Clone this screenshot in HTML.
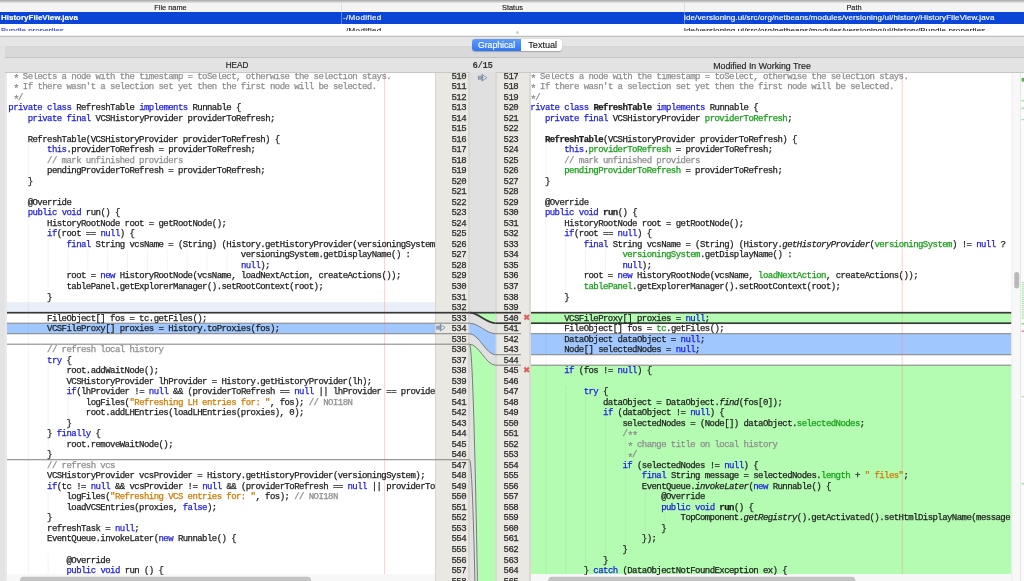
<!DOCTYPE html><html><head><meta charset="utf-8"><style>
html,body{margin:0;padding:0;width:1024px;height:581px;overflow:hidden;background:#e3e3e3;position:relative}
*{box-sizing:border-box}
.abs{position:absolute}
.sans{font-family:"Liberation Sans",sans-serif;will-change:transform;-webkit-text-stroke:0.15px currentColor}
.clip{position:absolute;overflow:hidden;will-change:transform}
.r,.n{position:absolute;white-space:pre;font-family:"Liberation Mono",monospace;font-size:9.0px;letter-spacing:-0.5558px;line-height:10.5px;color:#1e1e1e;-webkit-text-stroke:0.25px currentColor}
.n{color:#2a2a2a;text-align:right}
i{font-style:normal}
u{text-decoration:none;display:inline-block;width:4.845px;overflow:visible;text-align:center;letter-spacing:0;font-size:10.5px;line-height:0;position:relative;top:3.2px}
i.k{color:#1c1ce0}
i.c{color:#8e8e8e}
i.s{color:#ce7b00}
i.f{color:#17a017}
i.b{font-weight:bold}
i.i{font-style:italic}
</style></head><body>

<div class="abs" style="left:0;top:0;width:1024px;height:3px;background:linear-gradient(#a6a6a6,#e8e8e8)"></div>
<div class="abs" style="left:0;top:2.5px;width:1024px;height:9.5px;background:#f4f4f4"></div>
<div class="abs" style="left:341px;top:3px;width:1px;height:9px;background:#dedede"></div>
<div class="abs" style="left:684px;top:3px;width:1px;height:9px;background:#dedede"></div>
<div class="abs sans" style="left:0;top:2.5px;width:341px;text-align:center;font-size:7.4px;line-height:10px;color:#222">File name</div>
<div class="abs sans" style="left:341px;top:2.5px;width:343px;text-align:center;font-size:7.4px;line-height:10px;color:#222">Status</div>
<div class="abs sans" style="left:684px;top:2.5px;width:340px;text-align:center;font-size:7.4px;line-height:10px;color:#222">Path</div>
<div class="abs" style="left:0;top:12px;width:1024px;height:11.7px;background:#0b45d8"></div>
<div class="abs" style="left:341px;top:12px;width:1px;height:11.7px;background:#5c86e6"></div>
<div class="abs" style="left:684px;top:12px;width:1px;height:11.7px;background:#5c86e6"></div>
<div class="abs sans" style="left:1px;top:12px;font-size:8px;line-height:12px;font-weight:bold;color:#fff;white-space:pre">HistoryFileView.java</div>
<div class="abs sans" style="left:342.5px;top:12px;font-size:8px;line-height:12px;color:#fff;white-space:pre;letter-spacing:0.35px">-/Modified</div>
<div class="abs sans" style="left:684px;top:12px;font-size:8px;line-height:12px;color:#fff;white-space:pre;letter-spacing:0.14px">ide/versioning.ui/src/org/netbeans/modules/versioning/ui/history/HistoryFileView.java</div>
<div class="abs" style="left:0;top:23.7px;width:1024px;height:12px;background:#fff"></div>
<div class="clip" style="left:0;top:24px;width:1024px;height:6.8px">
 <div class="abs sans" style="left:1px;top:1.1px;font-size:8px;line-height:12px;color:#2b3ee0;white-space:pre">Bundle.properties</div>
 <div class="abs sans" style="left:342.5px;top:1.1px;font-size:8px;line-height:12px;color:#222;white-space:pre;letter-spacing:0.35px">-/Modified</div>
 <div class="abs sans" style="left:684px;top:1.1px;font-size:8px;line-height:12px;color:#222;white-space:pre;letter-spacing:0.14px">ide/versioning.ui/src/org/netbeans/modules/versioning/ui/history/Bundle.properties</div>
</div>
<div class="abs" style="left:0;top:34.5px;width:1024px;height:2px;background:linear-gradient(#fbfbfb,#d0d0d0)"></div>
<div class="abs" style="left:0;top:36px;width:1024px;height:1.2px;background:#bdbdbd"></div>
<div class="abs" style="left:515.5px;top:31px;width:3px;height:3px;border-radius:1.5px;background:#cfcfcf"></div>
<!-- toolbar strip -->
<div class="abs" style="left:0;top:37.2px;width:1024px;height:9px;background:#e6e6e6"></div>
<!-- inner panel -->
<div class="abs" style="left:5px;top:46px;width:1019px;height:11.4px;background:#d9d9d9;border-top-left-radius:3px;border-top:1px solid #d6d6d6"></div>
<div class="abs" style="left:5px;top:57px;width:1019px;height:1px;background:#c4c4c4"></div>
<div class="abs" style="left:5px;top:58px;width:1019px;height:14.3px;background:#e3e3e3"></div>
<div class="abs" style="left:5px;top:72px;width:464.5px;height:1px;background:#c6c6c6"></div>
<div class="abs" style="left:495.5px;top:72px;width:528.5px;height:1px;background:#c6c6c6"></div>
<div class="abs" style="left:5px;top:72.5px;width:2px;height:509px;background:#e9e9e9"></div>
<div class="abs sans" style="left:5px;top:61px;width:464px;text-align:center;font-size:8.2px;line-height:10px;color:#222">HEAD</div>
<div class="abs" style="left:469.5px;top:60.5px;width:26px;text-align:center;font-family:'Liberation Mono',monospace;font-weight:bold;font-size:9px;letter-spacing:-0.45px;line-height:10px;color:#333">6/15</div>
<div class="abs sans" style="left:500px;top:61px;width:524px;text-align:center;font-size:8.8px;line-height:10px;color:#222">Modified In Working Tree</div>
<!-- segmented control -->
<div class="abs" style="left:472px;top:38.8px;width:90.4px;height:12.7px;border-radius:3px;background:#fff;box-shadow:0 0.5px 1px rgba(0,0,0,0.25)"></div>
<div class="abs" style="left:472px;top:38.8px;width:49px;height:12.7px;border-radius:3px 0 0 3px;background:linear-gradient(#5e9bf8,#2f76f4)"></div>
<div class="abs sans" style="left:472px;top:39px;width:49px;text-align:center;font-size:8.7px;line-height:12.5px;color:#fff">Graphical</div>
<div class="abs sans" style="left:522px;top:39px;width:41.4px;text-align:center;font-size:9.1px;line-height:12.5px;color:#222">Textual</div>

<div class="abs" style="left:7.0px;top:72.5px;width:428.0px;height:501.5px;background:#fff"></div>
<div class="abs" style="left:531.0px;top:72.5px;width:480.6px;height:501.5px;background:#fff"></div>
<svg class="abs" style="left:0;top:0" width="1024" height="581" viewBox="0 0 1024 581"><rect x="7.00" y="302.20" width="428.00" height="10.50" fill="#e9eff8" />
<rect x="7.00" y="323.20" width="462.50" height="10.50" fill="#a0c8ff" />
<rect x="531.00" y="312.70" width="480.60" height="10.50" fill="#b4fcb2" />
<rect x="531.00" y="333.70" width="480.60" height="21.00" fill="#a0c8ff" />
<rect x="531.00" y="365.20" width="480.60" height="208.80" fill="#b4fcb2" />
<rect x="384.10" y="72.50" width="1.00" height="501.50" fill="rgba(255,140,140,0.42)" />
<rect x="901.70" y="72.50" width="1.00" height="501.50" fill="rgba(255,140,140,0.42)" />
<line x1="28.30" y1="144.70" x2="28.30" y2="176.20" stroke="rgba(0,0,0,0.11)" stroke-width="0.9" stroke-dasharray="1 1"/>
<line x1="28.30" y1="218.20" x2="28.30" y2="574.00" stroke="rgba(0,0,0,0.11)" stroke-width="0.9" stroke-dasharray="1 1"/>
<line x1="48.15" y1="239.20" x2="48.15" y2="291.70" stroke="rgba(0,0,0,0.11)" stroke-width="0.9" stroke-dasharray="1 1"/>
<line x1="48.15" y1="365.20" x2="48.15" y2="428.20" stroke="rgba(0,0,0,0.11)" stroke-width="0.9" stroke-dasharray="1 1"/>
<line x1="48.15" y1="438.70" x2="48.15" y2="449.20" stroke="rgba(0,0,0,0.11)" stroke-width="0.9" stroke-dasharray="1 1"/>
<line x1="48.15" y1="491.20" x2="48.15" y2="512.20" stroke="rgba(0,0,0,0.11)" stroke-width="0.9" stroke-dasharray="1 1"/>
<line x1="48.15" y1="554.20" x2="48.15" y2="574.00" stroke="rgba(0,0,0,0.11)" stroke-width="0.9" stroke-dasharray="1 1"/>
<line x1="68.00" y1="249.70" x2="68.00" y2="270.70" stroke="rgba(0,0,0,0.11)" stroke-width="0.9" stroke-dasharray="1 1"/>
<line x1="68.00" y1="396.70" x2="68.00" y2="417.70" stroke="rgba(0,0,0,0.11)" stroke-width="0.9" stroke-dasharray="1 1"/>
<line x1="87.85" y1="249.70" x2="87.85" y2="270.70" stroke="rgba(0,0,0,0.11)" stroke-width="0.9" stroke-dasharray="1 1"/>
<line x1="107.70" y1="249.70" x2="107.70" y2="270.70" stroke="rgba(0,0,0,0.11)" stroke-width="0.9" stroke-dasharray="1 1"/>
<line x1="127.55" y1="249.70" x2="127.55" y2="270.70" stroke="rgba(0,0,0,0.11)" stroke-width="0.9" stroke-dasharray="1 1"/>
<line x1="147.40" y1="249.70" x2="147.40" y2="270.70" stroke="rgba(0,0,0,0.11)" stroke-width="0.9" stroke-dasharray="1 1"/>
<line x1="167.25" y1="249.70" x2="167.25" y2="270.70" stroke="rgba(0,0,0,0.11)" stroke-width="0.9" stroke-dasharray="1 1"/>
<line x1="187.10" y1="249.70" x2="187.10" y2="270.70" stroke="rgba(0,0,0,0.11)" stroke-width="0.9" stroke-dasharray="1 1"/>
<line x1="206.95" y1="249.70" x2="206.95" y2="270.70" stroke="rgba(0,0,0,0.11)" stroke-width="0.9" stroke-dasharray="1 1"/>
<line x1="226.80" y1="249.70" x2="226.80" y2="270.70" stroke="rgba(0,0,0,0.11)" stroke-width="0.9" stroke-dasharray="1 1"/>
<line x1="545.90" y1="144.70" x2="545.90" y2="176.20" stroke="rgba(0,0,0,0.11)" stroke-width="0.9" stroke-dasharray="1 1"/>
<line x1="545.90" y1="218.20" x2="545.90" y2="574.00" stroke="rgba(0,0,0,0.11)" stroke-width="0.9" stroke-dasharray="1 1"/>
<line x1="565.75" y1="239.20" x2="565.75" y2="291.70" stroke="rgba(0,0,0,0.11)" stroke-width="0.9" stroke-dasharray="1 1"/>
<line x1="565.75" y1="386.20" x2="565.75" y2="574.00" stroke="rgba(0,0,0,0.11)" stroke-width="0.9" stroke-dasharray="1 1"/>
<line x1="585.60" y1="249.70" x2="585.60" y2="270.70" stroke="rgba(0,0,0,0.11)" stroke-width="0.9" stroke-dasharray="1 1"/>
<line x1="585.60" y1="396.70" x2="585.60" y2="564.70" stroke="rgba(0,0,0,0.11)" stroke-width="0.9" stroke-dasharray="1 1"/>
<line x1="605.45" y1="249.70" x2="605.45" y2="270.70" stroke="rgba(0,0,0,0.11)" stroke-width="0.9" stroke-dasharray="1 1"/>
<line x1="605.45" y1="417.70" x2="605.45" y2="554.20" stroke="rgba(0,0,0,0.11)" stroke-width="0.9" stroke-dasharray="1 1"/>
<line x1="625.30" y1="438.70" x2="625.30" y2="459.70" stroke="rgba(0,0,0,0.11)" stroke-width="0.9" stroke-dasharray="1 1"/>
<line x1="625.30" y1="470.20" x2="625.30" y2="543.70" stroke="rgba(0,0,0,0.11)" stroke-width="0.9" stroke-dasharray="1 1"/>
<line x1="645.15" y1="491.20" x2="645.15" y2="533.20" stroke="rgba(0,0,0,0.11)" stroke-width="0.9" stroke-dasharray="1 1"/>
<line x1="665.00" y1="512.20" x2="665.00" y2="522.70" stroke="rgba(0,0,0,0.11)" stroke-width="0.9" stroke-dasharray="1 1"/>
<rect x="435.00" y="72.50" width="34.50" height="508.50" fill="#e9e8e3" />
<rect x="435.00" y="72.50" width="1.00" height="508.50" fill="#d6d5d0" />
<rect x="469.50" y="72.50" width="26.00" height="508.50" fill="#e0e0e0" />
<rect x="495.50" y="72.50" width="35.50" height="508.50" fill="#e9e8e3" />
<rect x="529.00" y="72.50" width="2.00" height="508.50" fill="#d9d8d3" />
<rect x="468.50" y="72.50" width="1.00" height="508.50" fill="#c9c9c6" />
<rect x="495.50" y="72.50" width="1.00" height="508.50" fill="#c9c9c6" />
<rect x="435.00" y="72.00" width="34.50" height="1.00" fill="#c9c9c6" />
<rect x="495.50" y="72.00" width="35.50" height="1.00" fill="#c9c9c6" />
<path d="M 469.5 344.20 C 478.86 344.20 486.14 365.20 495.50 365.20 L 495.5 1444.2 C 486.14 1444.20 478.86 344.20 469.50 344.20 Z" fill="#b4fcb2"/>
<path d="M 469.5 344.20 C 478.86 344.20 486.14 365.20 495.50 365.20" fill="none" stroke="#7a7a7a" stroke-width="1"/>
<path d="M 469.5 344.20 C 478.86 344.20 486.14 1444.20 495.50 1444.20" fill="none" stroke="#7a7a7a" stroke-width="1"/>
<path d="M 469.5 459.70 C 478.86 459.70 486.14 1609.70 495.50 1609.70" fill="none" stroke="#7a7a7a" stroke-width="1"/>
<path d="M 469.5 323.20 C 478.86 323.20 486.14 333.70 495.50 333.70 L 495.5 354.70 C 486.14 354.70 478.86 333.70 469.50 333.70 Z" fill="#a0c8ff"/>
<path d="M 469.5 323.20 C 478.86 323.20 486.14 333.70 495.50 333.70" fill="none" stroke="#7a7a7a" stroke-width="1"/>
<path d="M 469.5 333.70 C 478.86 333.70 486.14 354.70 495.50 354.70" fill="none" stroke="#7a7a7a" stroke-width="1"/>
<path d="M 469.5 312.70 L 495.5 312.70 L 495.5 323.20 C 486.14 323.20 478.86 312.70 469.50 312.70 Z" fill="#b4fcb2"/>
<path d="M 469.5 312.70 L 495.5 312.70" fill="none" stroke="#383838" stroke-width="1.7"/>
<path d="M 469.5 312.70 C 478.86 312.70 486.14 323.20 495.50 323.20" fill="none" stroke="#383838" stroke-width="1.7"/>
<rect x="7.00" y="311.85" width="462.50" height="1.70" fill="#383838" />
<rect x="7.00" y="322.65" width="462.50" height="1.10" fill="#8a8a8a" />
<rect x="7.00" y="333.15" width="462.50" height="1.10" fill="#8a8a8a" />
<rect x="7.00" y="343.65" width="462.50" height="1.10" fill="#8a8a8a" />
<rect x="7.00" y="459.15" width="462.50" height="1.10" fill="#8a8a8a" />
<rect x="495.50" y="311.85" width="25.50" height="1.70" fill="#383838" />
<rect x="531.00" y="311.85" width="480.60" height="1.70" fill="#383838" />
<rect x="495.50" y="322.35" width="25.50" height="1.70" fill="#383838" />
<rect x="531.00" y="322.35" width="480.60" height="1.70" fill="#383838" />
<rect x="495.50" y="333.15" width="25.50" height="1.10" fill="#8a8a8a" />
<rect x="531.00" y="333.15" width="480.60" height="1.10" fill="#8a8a8a" />
<rect x="495.50" y="354.15" width="25.50" height="1.10" fill="#8a8a8a" />
<rect x="531.00" y="354.15" width="480.60" height="1.10" fill="#8a8a8a" />
<rect x="495.50" y="364.65" width="25.50" height="1.10" fill="#8a8a8a" />
<rect x="531.00" y="364.65" width="480.60" height="1.10" fill="#8a8a8a" />
<rect x="7.00" y="574.00" width="428.00" height="7.00" fill="#f7f7f7" />
<rect x="20" y="576.8" width="291" height="8" rx="3.5" fill="#c3c3c3"/>
<rect x="531.00" y="574.00" width="480.60" height="7.00" fill="#f7f7f7" />
<rect x="548.3" y="576.8" width="307" height="8" rx="3.5" fill="#c3c3c3"/>
<rect x="1011.60" y="73.00" width="12.40" height="508.00" fill="#f8f8f8" />
<rect x="1011.60" y="73.00" width="0.80" height="508.00" fill="#ebebeb" />
<rect x="1020.30" y="73.00" width="0.80" height="508.00" fill="#e0e0e0" />
<rect x="1021.10" y="73.00" width="3.00" height="508.00" fill="#fcfcfc" />
<rect x="1014.2" y="272" width="5" height="16.5" rx="2.5" fill="#b9b9b9"/>
<rect x="1021.60" y="77.80" width="2.40" height="3.80" fill="#52b552" />
<rect x="1021.60" y="100.00" width="2.40" height="1.50" fill="#9be89b" />
<rect x="1021.60" y="107.50" width="2.40" height="1.50" fill="#9be89b" />
<rect x="1021.60" y="119.00" width="2.40" height="1.20" fill="#9be89b" />
<rect x="1021.60" y="323.00" width="2.40" height="1.50" fill="#88dd88" />
<rect x="1021.60" y="330.50" width="2.40" height="1.50" fill="#ee8888" />
<rect x="1021.60" y="396.00" width="2.40" height="1.20" fill="#9be89b" />
<rect x="1021.60" y="483.00" width="2.40" height="1.50" fill="#9be89b" />
<rect x="1021.60" y="282.00" width="2.40" height="1.10" fill="#a6e8a6" />
<rect x="1021.60" y="284.10" width="2.40" height="1.10" fill="#a6e8a6" />
<rect x="1021.60" y="286.20" width="2.40" height="1.10" fill="#a6e8a6" />
<rect x="1021.60" y="288.30" width="2.40" height="1.10" fill="#a6e8a6" />
<rect x="1021.60" y="290.40" width="2.40" height="1.10" fill="#a6e8a6" />
<rect x="1021.60" y="292.50" width="2.40" height="1.10" fill="#a6e8a6" />
<rect x="1021.60" y="294.60" width="2.40" height="1.10" fill="#a6e8a6" />
<rect x="1021.60" y="296.70" width="2.40" height="1.10" fill="#a6e8a6" />
<rect x="1021.60" y="298.80" width="2.40" height="1.10" fill="#a6e8a6" />
<rect x="1021.60" y="300.90" width="2.40" height="1.10" fill="#a6e8a6" />
<rect x="1021.60" y="303.00" width="2.40" height="1.10" fill="#a6e8a6" />
<rect x="1021.60" y="305.10" width="2.40" height="1.10" fill="#a6e8a6" />
<rect x="1021.60" y="307.20" width="2.40" height="1.10" fill="#a6e8a6" />
<rect x="1021.60" y="309.30" width="2.40" height="1.10" fill="#a6e8a6" />
<rect x="1021.60" y="311.40" width="2.40" height="1.10" fill="#a6e8a6" />
<rect x="1021.60" y="313.50" width="2.40" height="1.10" fill="#a6e8a6" />
<rect x="1021.60" y="315.60" width="2.40" height="1.10" fill="#a6e8a6" />
<rect x="1021.60" y="317.70" width="2.40" height="1.10" fill="#a6e8a6" />
<g transform="translate(436.20,324.10)"><rect x="0" y="1.6" width="5" height="3.9" fill="#8593aa"/><rect x="1.2" y="1.6" width="0.6" height="3.9" fill="#a9b4c6"/><rect x="2.6" y="1.6" width="0.6" height="3.9" fill="#a9b4c6"/><path d="M3.9 0.2 L8.9 3.55 L3.9 6.9 L5.2 3.55 Z" fill="#eef2f9" stroke="#7283a0" stroke-width="0.85" stroke-linejoin="round"/></g>
<g transform="translate(477.90,74.20)"><rect x="0" y="1.6" width="5" height="3.9" fill="#8593aa"/><rect x="1.2" y="1.6" width="0.6" height="3.9" fill="#a9b4c6"/><rect x="2.6" y="1.6" width="0.6" height="3.9" fill="#a9b4c6"/><path d="M3.9 0.2 L8.9 3.55 L3.9 6.9 L5.2 3.55 Z" fill="#eef2f9" stroke="#7283a0" stroke-width="0.85" stroke-linejoin="round"/></g>
<g transform="translate(523.50,314.10)"><path d="M0.9 0.9 L5.5 5.5 M5.5 0.9 L0.9 5.5" stroke="#e06060" stroke-width="2.1" stroke-linecap="butt"/></g>
<g transform="translate(523.50,366.60)"><path d="M0.9 0.9 L5.5 5.5 M5.5 0.9 L0.9 5.5" stroke="#e06060" stroke-width="2.1" stroke-linecap="butt"/></g></svg>
<div class="clip" style="left:7.0px;top:72.5px;width:428.0px;height:501.5px"><div class="abs" style="left:-7.0px;top:-72.5px">
<div class="r" style="top:71.10px;left:8.30px"><i class="c"> <u>*</u> Selects a node with the timestamp = toSelect, otherwise the selection stays.</i></div>
<div class="r" style="top:81.62px;left:8.30px"><i class="c"> <u>*</u> If there wasn't a selection set yet then the first node will be selected.</i></div>
<div class="r" style="top:92.14px;left:8.30px"><i class="c"> <u>*</u>/</i></div>
<div class="r" style="top:102.66px;left:8.30px"><i class="k">private</i> <i class="k">class</i> RefreshTable <i class="k">implements</i> Runnable {</div>
<div class="r" style="top:113.18px;left:8.30px">    <i class="k">private</i> <i class="k">final</i> VCSHistoryProvider providerToRefresh;</div>
<div class="r" style="top:123.70px;left:8.30px"></div>
<div class="r" style="top:134.22px;left:8.30px">    RefreshTable(VCSHistoryProvider providerToRefresh) {</div>
<div class="r" style="top:144.74px;left:8.30px">        <i class="k">this</i>.providerToRefresh = providerToRefresh;</div>
<div class="r" style="top:155.26px;left:8.30px">        <i class="c">// mark unfinished providers</i></div>
<div class="r" style="top:165.78px;left:8.30px">        pendingProviderToRefresh = providerToRefresh;</div>
<div class="r" style="top:176.30px;left:8.30px">    }</div>
<div class="r" style="top:186.82px;left:8.30px"></div>
<div class="r" style="top:197.34px;left:8.30px">    @Override</div>
<div class="r" style="top:207.86px;left:8.30px">    <i class="k">public</i> <i class="k">void</i> run() {</div>
<div class="r" style="top:218.38px;left:8.30px">        HistoryRootNode root = getRootNode();</div>
<div class="r" style="top:228.90px;left:8.30px">        <i class="k">if</i>(root == <i class="k">null</i>) {</div>
<div class="r" style="top:239.42px;left:8.30px">            <i class="k">final</i> String vcsName = (String) (History.getHistoryProvider(versioningSystem) != <i class="k">null</i> ?</div>
<div class="r" style="top:249.94px;left:8.30px">                                                versioningSystem.getDisplayName() :</div>
<div class="r" style="top:260.46px;left:8.30px">                                                <i class="k">null</i>);</div>
<div class="r" style="top:270.98px;left:8.30px">            root = <i class="k">new</i> HistoryRootNode(vcsName, loadNextAction, createActions());</div>
<div class="r" style="top:281.50px;left:8.30px">            tablePanel.getExplorerManager().setRootContext(root);</div>
<div class="r" style="top:292.02px;left:8.30px">        }</div>
<div class="r" style="top:302.54px;left:8.30px"></div>
<div class="r" style="top:313.06px;left:8.30px">        FileObject[] fos = tc.getFiles();</div>
<div class="r" style="top:323.58px;left:8.30px">        VCSFileProxy[] proxies = History.toProxies(fos);</div>
<div class="r" style="top:334.10px;left:8.30px"></div>
<div class="r" style="top:344.62px;left:8.30px">        <i class="c">// refresh local history</i></div>
<div class="r" style="top:355.14px;left:8.30px">        <i class="k">try</i> {</div>
<div class="r" style="top:365.66px;left:8.30px">            root.addWaitNode();</div>
<div class="r" style="top:376.18px;left:8.30px">            VCSHistoryProvider lhProvider = History.getHistoryProvider(lh);</div>
<div class="r" style="top:386.70px;left:8.30px">            <i class="k">if</i>(lhProvider != <i class="k">null</i> &amp;&amp; (providerToRefresh == <i class="k">null</i> || lhProvider == providerToRefresh)) {</div>
<div class="r" style="top:397.22px;left:8.30px">                logFiles(<i class="s">"Refreshing LH entries for: "</i>, fos); <i class="c">// NOI18N</i></div>
<div class="r" style="top:407.74px;left:8.30px">                root.addLHEntries(loadLHEntries(proxies), 0);</div>
<div class="r" style="top:418.26px;left:8.30px">            }</div>
<div class="r" style="top:428.78px;left:8.30px">        } <i class="k">finally</i> {</div>
<div class="r" style="top:439.30px;left:8.30px">            root.removeWaitNode();</div>
<div class="r" style="top:449.82px;left:8.30px">        }</div>
<div class="r" style="top:460.34px;left:8.30px">        <i class="c">// refresh vcs</i></div>
<div class="r" style="top:470.86px;left:8.30px">        VCSHistoryProvider vcsProvider = History.getHistoryProvider(versioningSystem);</div>
<div class="r" style="top:481.38px;left:8.30px">        <i class="k">if</i>(tc != <i class="k">null</i> &amp;&amp; vcsProvider != <i class="k">null</i> &amp;&amp; (providerToRefresh == <i class="k">null</i> || providerToRefresh == vcsProvider)) {</div>
<div class="r" style="top:491.90px;left:8.30px">            logFiles(<i class="s">"Refreshing VCS entries for: "</i>, fos); <i class="c">// NOI18N</i></div>
<div class="r" style="top:502.42px;left:8.30px">            loadVCSEntries(proxies, <i class="k">false</i>);</div>
<div class="r" style="top:512.94px;left:8.30px">        }</div>
<div class="r" style="top:523.46px;left:8.30px">        refreshTask = <i class="k">null</i>;</div>
<div class="r" style="top:533.98px;left:8.30px">        EventQueue.invokeLater(<i class="k">new</i> Runnable() {</div>
<div class="r" style="top:544.50px;left:8.30px"></div>
<div class="r" style="top:555.02px;left:8.30px">            @Override</div>
<div class="r" style="top:565.54px;left:8.30px">            <i class="k">public</i> <i class="k">void</i> run () {</div>
<div class="r" style="top:576.06px;left:8.30px">                tablePanel.getExplorerManager().setRootContext(root);</div>
</div></div>
<div class="clip" style="left:531.0px;top:72.5px;width:480.6px;height:501.5px"><div class="abs" style="left:-531.0px;top:-72.5px">
<div class="r" style="top:71.10px;left:525.50px"><i class="c"> <u>*</u> Selects a node with the timestamp = toSelect, otherwise the selection stays.</i></div>
<div class="r" style="top:81.62px;left:525.50px"><i class="c"> <u>*</u> If there wasn't a selection set yet then the first node will be selected.</i></div>
<div class="r" style="top:92.14px;left:525.50px"><i class="c"> <u>*</u>/</i></div>
<div class="r" style="top:102.66px;left:525.50px"><i class="k">private</i> <i class="k">class</i> <i class="b">RefreshTable</i> <i class="k">implements</i> Runnable {</div>
<div class="r" style="top:113.18px;left:525.50px">    <i class="k">private</i> <i class="k">final</i> VCSHistoryProvider <i class="f">providerToRefresh</i>;</div>
<div class="r" style="top:123.70px;left:525.50px"></div>
<div class="r" style="top:134.22px;left:525.50px">    <i class="b">RefreshTable</i>(VCSHistoryProvider providerToRefresh) {</div>
<div class="r" style="top:144.74px;left:525.50px">        <i class="k">this</i>.<i class="f">providerToRefresh</i> = providerToRefresh;</div>
<div class="r" style="top:155.26px;left:525.50px">        <i class="c">// mark unfinished providers</i></div>
<div class="r" style="top:165.78px;left:525.50px">        <i class="f">pendingProviderToRefresh</i> = providerToRefresh;</div>
<div class="r" style="top:176.30px;left:525.50px">    }</div>
<div class="r" style="top:186.82px;left:525.50px"></div>
<div class="r" style="top:197.34px;left:525.50px">    @Override</div>
<div class="r" style="top:207.86px;left:525.50px">    <i class="k">public</i> <i class="k">void</i> <i class="b">run</i>() {</div>
<div class="r" style="top:218.38px;left:525.50px">        HistoryRootNode root = getRootNode();</div>
<div class="r" style="top:228.90px;left:525.50px">        <i class="k">if</i>(root == <i class="k">null</i>) {</div>
<div class="r" style="top:239.42px;left:525.50px">            <i class="k">final</i> String vcsName = (String) (History.<i class="i">getHistoryProvider</i>(<i class="f">versioningSystem</i>) != <i class="k">null</i> ?</div>
<div class="r" style="top:249.94px;left:525.50px">                    <i class="f">versioningSystem</i>.getDisplayName() :</div>
<div class="r" style="top:260.46px;left:525.50px">                    <i class="k">null</i>);</div>
<div class="r" style="top:270.98px;left:525.50px">            root = <i class="k">new</i> HistoryRootNode(vcsName, <i class="f">loadNextAction</i>, createActions());</div>
<div class="r" style="top:281.50px;left:525.50px">            <i class="f">tablePanel</i>.getExplorerManager().setRootContext(root);</div>
<div class="r" style="top:292.02px;left:525.50px">        }</div>
<div class="r" style="top:302.54px;left:525.50px"></div>
<div class="r" style="top:313.06px;left:525.50px">        VCSFileProxy[] proxies = <i class="k">null</i>;</div>
<div class="r" style="top:323.58px;left:525.50px">        FileObject[] fos = <i class="f">tc</i>.getFiles();</div>
<div class="r" style="top:334.10px;left:525.50px">        DataObject dataObject = <i class="k">null</i>;</div>
<div class="r" style="top:344.62px;left:525.50px">        Node[] selectedNodes = <i class="k">null</i>;</div>
<div class="r" style="top:355.14px;left:525.50px"></div>
<div class="r" style="top:365.66px;left:525.50px">        <i class="k">if</i> (fos != <i class="k">null</i>) {</div>
<div class="r" style="top:376.18px;left:525.50px"></div>
<div class="r" style="top:386.70px;left:525.50px">            <i class="k">try</i> {</div>
<div class="r" style="top:397.22px;left:525.50px">                dataObject = DataObject.<i class="i">find</i>(fos[0]);</div>
<div class="r" style="top:407.74px;left:525.50px">                <i class="k">if</i> (dataObject != <i class="k">null</i>) {</div>
<div class="r" style="top:418.26px;left:525.50px">                    selectedNodes = (Node[]) dataObject.<i class="f">selectedNodes</i>;</div>
<div class="r" style="top:428.78px;left:525.50px">                    <i class="c">/<u>*</u><u>*</u></i></div>
<div class="r" style="top:439.30px;left:525.50px">                    <i class="c"> <u>*</u> change title on local history</i></div>
<div class="r" style="top:449.82px;left:525.50px">                    <i class="c"> <u>*</u>/</i></div>
<div class="r" style="top:460.34px;left:525.50px">                    <i class="k">if</i> (selectedNodes != <i class="k">null</i>) {</div>
<div class="r" style="top:470.86px;left:525.50px">                        <i class="k">final</i> String message = selectedNodes.<i class="f">length</i> + <i class="s">" files"</i>;</div>
<div class="r" style="top:481.38px;left:525.50px">                        EventQueue.<i class="i">invokeLater</i>(<i class="k">new</i> Runnable() {</div>
<div class="r" style="top:491.90px;left:525.50px">                            @Override</div>
<div class="r" style="top:502.42px;left:525.50px">                            <i class="k">public</i> <i class="k">void</i> <i class="b">run</i>() {</div>
<div class="r" style="top:512.94px;left:525.50px">                                TopComponent.<i class="i">getRegistry</i>().getActivated().setHtmlDisplayName(message</div>
<div class="r" style="top:523.46px;left:525.50px">                            }</div>
<div class="r" style="top:533.98px;left:525.50px">                        });</div>
<div class="r" style="top:544.50px;left:525.50px">                    }</div>
<div class="r" style="top:555.02px;left:525.50px">                }</div>
<div class="r" style="top:565.54px;left:525.50px">            } <i class="k">catch</i> (DataObjectNotFoundException ex) {</div>
<div class="r" style="top:576.06px;left:525.50px">                ErrorManager.getDefault().notify(ex);</div>
</div></div>
<div class="clip" style="left:435.0px;top:72.5px;width:34.5px;height:508.5px"><div class="abs" style="left:-435.0px;top:-72.5px;width:1024px">
<div class="n" style="top:71.10px;right:558.00px">510</div>
<div class="n" style="top:81.62px;right:558.00px">511</div>
<div class="n" style="top:92.14px;right:558.00px">512</div>
<div class="n" style="top:102.66px;right:558.00px">513</div>
<div class="n" style="top:113.18px;right:558.00px">514</div>
<div class="n" style="top:123.70px;right:558.00px">515</div>
<div class="n" style="top:134.22px;right:558.00px">516</div>
<div class="n" style="top:144.74px;right:558.00px">517</div>
<div class="n" style="top:155.26px;right:558.00px">518</div>
<div class="n" style="top:165.78px;right:558.00px">519</div>
<div class="n" style="top:176.30px;right:558.00px">520</div>
<div class="n" style="top:186.82px;right:558.00px">521</div>
<div class="n" style="top:197.34px;right:558.00px">522</div>
<div class="n" style="top:207.86px;right:558.00px">523</div>
<div class="n" style="top:218.38px;right:558.00px">524</div>
<div class="n" style="top:228.90px;right:558.00px">525</div>
<div class="n" style="top:239.42px;right:558.00px">526</div>
<div class="n" style="top:249.94px;right:558.00px">527</div>
<div class="n" style="top:260.46px;right:558.00px">528</div>
<div class="n" style="top:270.98px;right:558.00px">529</div>
<div class="n" style="top:281.50px;right:558.00px">530</div>
<div class="n" style="top:292.02px;right:558.00px">531</div>
<div class="n" style="top:302.54px;right:558.00px">532</div>
<div class="n" style="top:313.06px;right:558.00px">533</div>
<div class="n" style="top:323.58px;right:558.00px">534</div>
<div class="n" style="top:334.10px;right:558.00px">535</div>
<div class="n" style="top:344.62px;right:558.00px">536</div>
<div class="n" style="top:355.14px;right:558.00px">537</div>
<div class="n" style="top:365.66px;right:558.00px">538</div>
<div class="n" style="top:376.18px;right:558.00px">539</div>
<div class="n" style="top:386.70px;right:558.00px">540</div>
<div class="n" style="top:397.22px;right:558.00px">541</div>
<div class="n" style="top:407.74px;right:558.00px">542</div>
<div class="n" style="top:418.26px;right:558.00px">543</div>
<div class="n" style="top:428.78px;right:558.00px">544</div>
<div class="n" style="top:439.30px;right:558.00px">545</div>
<div class="n" style="top:449.82px;right:558.00px">546</div>
<div class="n" style="top:460.34px;right:558.00px">547</div>
<div class="n" style="top:470.86px;right:558.00px">548</div>
<div class="n" style="top:481.38px;right:558.00px">549</div>
<div class="n" style="top:491.90px;right:558.00px">550</div>
<div class="n" style="top:502.42px;right:558.00px">551</div>
<div class="n" style="top:512.94px;right:558.00px">552</div>
<div class="n" style="top:523.46px;right:558.00px">553</div>
<div class="n" style="top:533.98px;right:558.00px">554</div>
<div class="n" style="top:544.50px;right:558.00px">555</div>
<div class="n" style="top:555.02px;right:558.00px">556</div>
<div class="n" style="top:565.54px;right:558.00px">557</div>
<div class="n" style="top:576.06px;right:558.00px">558</div>
</div></div>
<div class="clip" style="left:495.5px;top:72.5px;width:35.5px;height:508.5px"><div class="abs" style="left:-495.5px;top:-72.5px;width:1024px">
<div class="n" style="top:71.10px;right:506.40px">517</div>
<div class="n" style="top:81.62px;right:506.40px">518</div>
<div class="n" style="top:92.14px;right:506.40px">519</div>
<div class="n" style="top:102.66px;right:506.40px">520</div>
<div class="n" style="top:113.18px;right:506.40px">521</div>
<div class="n" style="top:123.70px;right:506.40px">522</div>
<div class="n" style="top:134.22px;right:506.40px">523</div>
<div class="n" style="top:144.74px;right:506.40px">524</div>
<div class="n" style="top:155.26px;right:506.40px">525</div>
<div class="n" style="top:165.78px;right:506.40px">526</div>
<div class="n" style="top:176.30px;right:506.40px">527</div>
<div class="n" style="top:186.82px;right:506.40px">528</div>
<div class="n" style="top:197.34px;right:506.40px">529</div>
<div class="n" style="top:207.86px;right:506.40px">530</div>
<div class="n" style="top:218.38px;right:506.40px">531</div>
<div class="n" style="top:228.90px;right:506.40px">532</div>
<div class="n" style="top:239.42px;right:506.40px">533</div>
<div class="n" style="top:249.94px;right:506.40px">534</div>
<div class="n" style="top:260.46px;right:506.40px">535</div>
<div class="n" style="top:270.98px;right:506.40px">536</div>
<div class="n" style="top:281.50px;right:506.40px">537</div>
<div class="n" style="top:292.02px;right:506.40px">538</div>
<div class="n" style="top:302.54px;right:506.40px">539</div>
<div class="n" style="top:313.06px;right:506.40px">540</div>
<div class="n" style="top:323.58px;right:506.40px">541</div>
<div class="n" style="top:334.10px;right:506.40px">542</div>
<div class="n" style="top:344.62px;right:506.40px">543</div>
<div class="n" style="top:355.14px;right:506.40px">544</div>
<div class="n" style="top:365.66px;right:506.40px">545</div>
<div class="n" style="top:376.18px;right:506.40px">546</div>
<div class="n" style="top:386.70px;right:506.40px">547</div>
<div class="n" style="top:397.22px;right:506.40px">548</div>
<div class="n" style="top:407.74px;right:506.40px">549</div>
<div class="n" style="top:418.26px;right:506.40px">550</div>
<div class="n" style="top:428.78px;right:506.40px">551</div>
<div class="n" style="top:439.30px;right:506.40px">552</div>
<div class="n" style="top:449.82px;right:506.40px">553</div>
<div class="n" style="top:460.34px;right:506.40px">554</div>
<div class="n" style="top:470.86px;right:506.40px">555</div>
<div class="n" style="top:481.38px;right:506.40px">556</div>
<div class="n" style="top:491.90px;right:506.40px">557</div>
<div class="n" style="top:502.42px;right:506.40px">558</div>
<div class="n" style="top:512.94px;right:506.40px">559</div>
<div class="n" style="top:523.46px;right:506.40px">560</div>
<div class="n" style="top:533.98px;right:506.40px">561</div>
<div class="n" style="top:544.50px;right:506.40px">562</div>
<div class="n" style="top:555.02px;right:506.40px">563</div>
<div class="n" style="top:565.54px;right:506.40px">564</div>
<div class="n" style="top:576.06px;right:506.40px">565</div>
</div></div>
</body></html>
